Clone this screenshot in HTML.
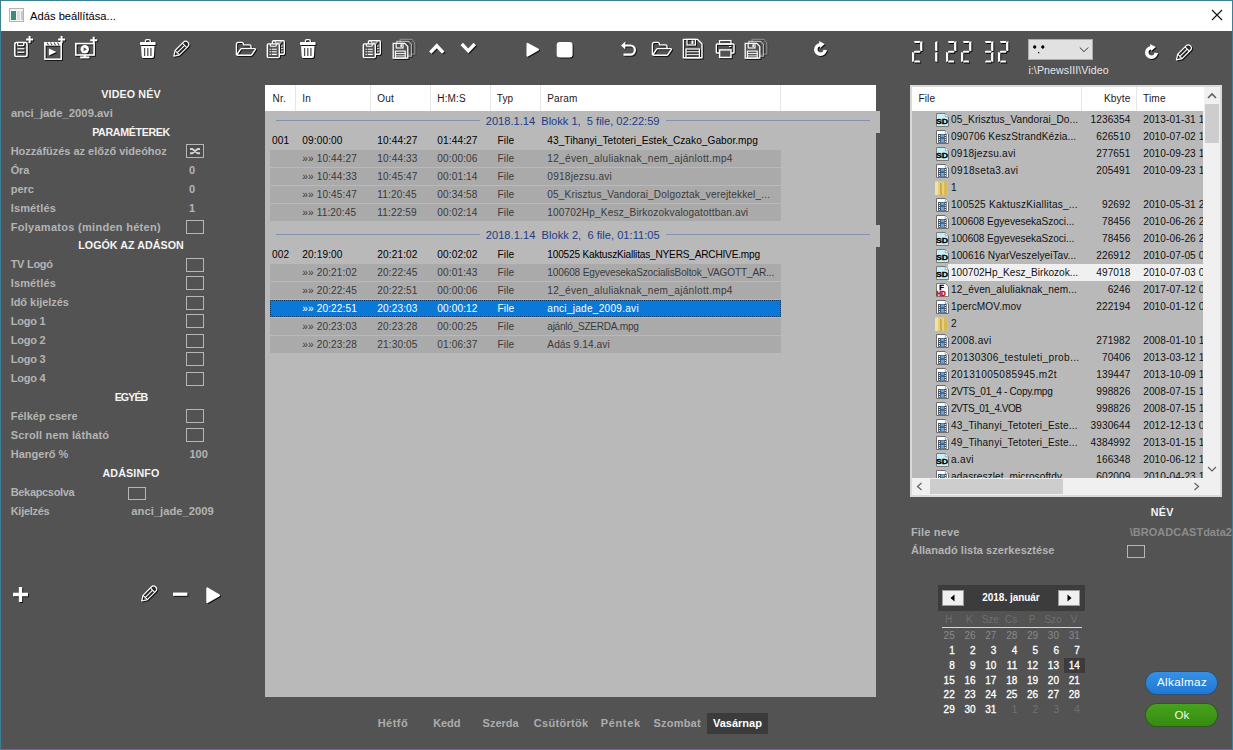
<!DOCTYPE html><html><head><meta charset="utf-8"><style>
html,body{margin:0;padding:0;}
body{width:1233px;height:750px;position:relative;overflow:hidden;font-family:"Liberation Sans",sans-serif;}
.t{position:absolute;white-space:nowrap;line-height:1;}
.r{position:absolute;}
.ics{filter:drop-shadow(0.9px 0.9px 0px #000);}
.ic{filter:drop-shadow(1px 1px 0.3px rgba(0,0,0,0.75));}
</style></head><body>
<div class="r" style="left:0px;top:0px;width:1233px;height:750px;background:#3d7f96;"></div>
<div class="r" style="left:1px;top:1px;width:1231px;height:30px;background:#ffffff;"></div>
<div class="r" style="left:1px;top:31px;width:1231px;height:718px;background:#535353;"></div>
<svg class="r " style="left:9px;top:8px" width="16" height="14" viewBox="0 0 16 14"><rect x="0.5" y="0.5" width="14" height="13" fill="#f4f4f4" stroke="#b4b4b4"/><rect x="2" y="3" width="5" height="9" fill="#3d8c78"/><rect x="8" y="3" width="3" height="9" fill="#dedede"/><rect x="12" y="3" width="2" height="9" fill="#c8c8c8"/></svg>
<div class="t" style="top:10.62px;font-size:11.2px;color:#000;letter-spacing:0.005px;left:30.00px;">Adás beállítása...</div>
<svg class="r " style="left:1208px;top:6px" width="18" height="18" viewBox="0 0 18 18"><path d="M4 4L14 14M14 4L4 14" stroke="#111" stroke-width="1.1"/></svg>
<svg class="r ic" style="left:10px;top:34px" width="26" height="26" viewBox="0 0 26 26"><rect x="4.8" y="8.5" width="12.2" height="14" rx="1.6" fill="none" stroke="#fff" stroke-width="1.6"/><path d="M7.6 8.6V10.8a0.8 0.8 0 0 0 0.8 0.8H13a0.8 0.8 0 0 0 0.8-0.8V8.6" fill="none" stroke="#fff" stroke-width="1.3"/><path d="M7.4 14.7h7M7.4 18.2h7" stroke="#fff" stroke-width="1.6" opacity="0.85"/><path d="M16.1 5.4h7M19.6 1.9000000000000004v7" stroke="#ffffff" stroke-width="2"/></svg>
<svg class="r ic" style="left:40px;top:34px" width="26" height="28" viewBox="0 0 26 28"><rect x="4.9" y="8.8" width="16.3" height="16.4" fill="none" stroke="#fff" stroke-width="1.5"/><rect x="4.2" y="8.1" width="17.7" height="3.6" fill="#fff"/><path d="M7 8.5L8.6 11.3M10.5 8.5L12.1 11.3M14 8.5L15.6 11.3M17.5 8.5L19.1 11.3" stroke="#535353" stroke-width="1.1"/><path d="M8.9 14.6L16.4 18.1L8.9 21.5Z" fill="#fff"/><path d="M18.1 5.4h7M21.6 1.9000000000000004v7" stroke="#ffffff" stroke-width="2"/></svg>
<svg class="r ic" style="left:72px;top:34px" width="28" height="28" viewBox="0 0 28 28"><rect x="3.8" y="9.6" width="18.3" height="11.4" fill="none" stroke="#fff" stroke-width="1.6"/><circle cx="12.8" cy="15.2" r="4.2" fill="#fff"/><path d="M11.6 13.2L14.9 15.2L11.6 17.2Z" fill="#535353"/><path d="M12.8 21v2" stroke="#fff" stroke-width="2"/><path d="M8.2 23.4h9.2" stroke="#fff" stroke-width="2"/><path d="M18.2 6.2h7M21.7 2.7v7" stroke="#ffffff" stroke-width="2"/></svg>
<svg class="r ic" style="left:139px;top:38px" width="20" height="24" viewBox="0 0 20 24"><rect x="1" y="4.1" width="15.6" height="2.9" rx="0.6" fill="#fff"/><path d="M6.4 4.2V3a1.3 1.3 0 0 1 1.3-1.3h2.2a1.3 1.3 0 0 1 1.3 1.3V4.2" fill="none" stroke="#fff" stroke-width="1.3"/><path d="M2.1 8.1h13.4l-0.5 10a2 2 0 0 1-2 1.9H4.6a2 2 0 0 1-2-1.9Z" fill="#fff"/><path d="M5.6 10v8M8.8 10v8M11.9 10v8" stroke="#535353" stroke-width="1.3"/></svg>
<svg class="r ic" style="left:172px;top:36px" width="24" height="24" viewBox="0 0 24 24"><g transform="translate(1.60 20.40) rotate(-45)"><path d="M5.2 -3.1H17A3.1 3.1 0 0 1 17 3.1H5.2Z" fill="#262626"/><path d="M0.3 0L5.2 -3.1H17A3.1 3.1 0 0 1 17 3.1H5.2Z" fill="none" stroke="#fff" stroke-width="1.15" stroke-linejoin="round"/><path d="M5.2 0H15.6" stroke="#fff" stroke-width="1.1"/><path d="M5.2 -3.1V3.1M15.6 -3.1V3.1" stroke="#fff" stroke-width="1.1"/></g></svg>
<svg class="r ic" style="left:235px;top:41px" width="24" height="18" viewBox="0 0 24 18"><path d="M1.4 14.3V3.2Q1.4 1.4 3.2 1.4H7Q7.8 1.4 8.2 2.2L8.7 3.9H14.4Q16 3.9 16 5.5V7.4" fill="none" stroke="#fff" stroke-width="1.4" stroke-linejoin="round"/><path d="M1.6 14.1L5.6 8.1Q6 7.6 6.6 7.6H19.4Q20.9 7.6 20.2 8.7L16.7 13.8Q16.3 14.3 15.6 14.3H2.2" fill="none" stroke="#fff" stroke-width="1.4" stroke-linejoin="round"/></svg>
<svg class="r ic" style="left:266px;top:38px" width="22" height="22" viewBox="0 0 22 22"><rect x="6.5" y="2.7" width="11.8" height="13.6" rx="1" fill="none" stroke="#fff" stroke-width="1.4"/><path d="M9.2 2.8V4.4a0.6 0.6 0 0 0 0.6 0.6h4.6a0.6 0.6 0 0 0 0.6-0.6V2.8" fill="none" stroke="#fff" stroke-width="1"/><path d="M15.2 8h1.6M15.2 10.6h1.6M15.2 13.2h1.6" stroke="#fff" stroke-width="1"/><rect x="1.3" y="5.9" width="12" height="13.7" rx="1" fill="#535353" stroke="#fff" stroke-width="1.4"/><path d="M4.3 6V7.6a0.6 0.6 0 0 0 0.6 0.6h4.8a0.6 0.6 0 0 0 0.6-0.6V6" fill="none" stroke="#fff" stroke-width="1.1"/><path d="M3.6 11.2h1.2M5.8 11.2h5M3.6 13.8h1.2M5.8 13.8h5M3.6 16.4h1.2M5.8 16.4h5" stroke="#fff" stroke-width="1.1"/></svg>
<svg class="r ic" style="left:299px;top:38px" width="20" height="24" viewBox="0 0 20 24"><rect x="1" y="4.1" width="15.6" height="2.9" rx="0.6" fill="#fff"/><path d="M6.4 4.2V3a1.3 1.3 0 0 1 1.3-1.3h2.2a1.3 1.3 0 0 1 1.3 1.3V4.2" fill="none" stroke="#fff" stroke-width="1.3"/><path d="M2.1 8.1h13.4l-0.5 10a2 2 0 0 1-2 1.9H4.6a2 2 0 0 1-2-1.9Z" fill="#fff"/><path d="M5.6 10v8M8.8 10v8M11.9 10v8" stroke="#535353" stroke-width="1.3"/></svg>
<svg class="r ic" style="left:362px;top:38px" width="22" height="22" viewBox="0 0 22 22"><rect x="6.5" y="2.7" width="11.8" height="13.6" rx="1" fill="none" stroke="#fff" stroke-width="1.4"/><path d="M9.2 2.8V4.4a0.6 0.6 0 0 0 0.6 0.6h4.6a0.6 0.6 0 0 0 0.6-0.6V2.8" fill="none" stroke="#fff" stroke-width="1"/><path d="M15.2 8h1.6M15.2 10.6h1.6M15.2 13.2h1.6" stroke="#fff" stroke-width="1"/><rect x="1.3" y="5.9" width="12" height="13.7" rx="1" fill="#535353" stroke="#fff" stroke-width="1.4"/><path d="M4.3 6V7.6a0.6 0.6 0 0 0 0.6 0.6h4.8a0.6 0.6 0 0 0 0.6-0.6V6" fill="none" stroke="#fff" stroke-width="1.1"/><path d="M3.6 11.2h1.2M5.8 11.2h5M3.6 13.8h1.2M5.8 13.8h5M3.6 16.4h1.2M5.8 16.4h5" stroke="#fff" stroke-width="1.1"/></svg>
<svg class="r ic" style="left:392px;top:38px" width="26" height="24" viewBox="0 0 26 24"><path d="M8.2 1.4000000000000004h11.6l3 3V16.2H8.2Z" fill="none" stroke="#fff" stroke-width="1.3" opacity="0.3"/><path d="M4.8 3.4000000000000004h11.6l3 3V18.2H4.8Z" fill="#535353" stroke="#fff" stroke-width="1.3" opacity="0.6"/><path d="M1.2 5.4h11.6l3 3V20.2H1.2Z" fill="#535353" stroke="#fff" stroke-width="1.3" opacity="1"/><rect x="4.2" y="5.4" width="6.8" height="4.6" fill="none" stroke="#fff" stroke-width="1.1"/><rect x="8.4" y="6.3" width="1.5" height="2.8" fill="#fff"/><rect x="3.4" y="13.1" width="9.8" height="7.1" fill="none" stroke="#fff" stroke-width="1.1"/><path d="M3.4 15.5h9.8M3.4 17.9h9.8" stroke="#fff" stroke-width="0.9"/></svg>
<svg class="r ic" style="left:428px;top:41px" width="18" height="15" viewBox="0 0 18 15"><path d="M2.3 11.6L8.8 4.8L15.3 11.6" fill="none" stroke="#fff" stroke-width="3.4"/></svg>
<svg class="r ic" style="left:459px;top:41px" width="18" height="15" viewBox="0 0 18 15"><path d="M2.8 3L9.3 9.8L15.8 3" fill="none" stroke="#fff" stroke-width="3.4"/></svg>
<svg class="r ic" style="left:525px;top:40px" width="17" height="19" viewBox="0 0 17 19"><path d="M3 2.9L13.6 8.8a1 1 0 0 1 0 1.6L3 16.5a1 1 0 0 1-1.5-0.9V3.8A1 1 0 0 1 3 2.9Z" fill="#fff"/></svg>
<svg class="r ic" style="left:555px;top:40px" width="19" height="19" viewBox="0 0 19 19"><rect x="1.7" y="2.1" width="15.9" height="15.3" rx="3" fill="#fff"/></svg>
<svg class="r ic" style="left:619px;top:39px" width="20" height="19" viewBox="0 0 20 19"><path d="M5 6.5H11.3A4.6 4.6 0 0 1 11.3 15.7H4.5" fill="none" stroke="#fff" stroke-width="2.2"/><path d="M2 6.5L6.3 2.5V10.5Z" fill="#fff"/></svg>
<svg class="r ic" style="left:651px;top:41px" width="24" height="18" viewBox="0 0 24 18"><path d="M1.4 14.3V3.2Q1.4 1.4 3.2 1.4H7Q7.8 1.4 8.2 2.2L8.7 3.9H14.4Q16 3.9 16 5.5V7.4" fill="none" stroke="#fff" stroke-width="1.4" stroke-linejoin="round"/><path d="M1.6 14.1L5.6 8.1Q6 7.6 6.6 7.6H19.4Q20.9 7.6 20.2 8.7L16.7 13.8Q16.3 14.3 15.6 14.3H2.2" fill="none" stroke="#fff" stroke-width="1.4" stroke-linejoin="round"/></svg>
<svg class="r ic" style="left:682px;top:38px" width="22" height="22" viewBox="0 0 22 22"><path d="M1.4 1.4H15.5L20 5.9V19.8H1.4Z" fill="none" stroke="#fff" stroke-width="1.4"/><rect x="5" y="1.4" width="8.4" height="5.6" fill="none" stroke="#fff" stroke-width="1.2"/><rect x="9.5" y="2.5" width="2" height="3.5" fill="#fff"/><rect x="4" y="11" width="13.4" height="8.8" fill="none" stroke="#fff" stroke-width="1.2"/><path d="M4 13.8h13.4M4 16.7h13.4" stroke="#fff" stroke-width="1"/></svg>
<svg class="r ic" style="left:715px;top:39px" width="21" height="21" viewBox="0 0 21 21"><rect x="4.6" y="1.6" width="11.4" height="3.4" fill="none" stroke="#fff" stroke-width="1.3"/><rect x="1.3" y="5" width="17.7" height="9" rx="0.8" fill="none" stroke="#fff" stroke-width="1.4"/><rect x="4.6" y="10.9" width="11.4" height="7.5" fill="#535353" stroke="#fff" stroke-width="1.4"/><path d="M14 7.5h2" stroke="#fff" stroke-width="1"/></svg>
<svg class="r ic" style="left:744px;top:38px" width="26" height="24" viewBox="0 0 26 24"><path d="M8.2 1.4000000000000004h11.6l3 3V16.2H8.2Z" fill="none" stroke="#fff" stroke-width="1.3" opacity="0.3"/><path d="M4.8 3.4000000000000004h11.6l3 3V18.2H4.8Z" fill="#535353" stroke="#fff" stroke-width="1.3" opacity="0.6"/><path d="M1.2 5.4h11.6l3 3V20.2H1.2Z" fill="#535353" stroke="#fff" stroke-width="1.3" opacity="1"/><rect x="4.2" y="5.4" width="6.8" height="4.6" fill="none" stroke="#fff" stroke-width="1.1"/><rect x="8.4" y="6.3" width="1.5" height="2.8" fill="#fff"/><rect x="3.4" y="13.1" width="9.8" height="7.1" fill="none" stroke="#fff" stroke-width="1.1"/><path d="M3.4 15.5h9.8M3.4 17.9h9.8" stroke="#fff" stroke-width="0.9"/></svg>
<svg class="r ic" style="left:811px;top:38px" width="18" height="19" viewBox="0 0 18 19"><path d="M14.18 11.91A4.7 4.7 0 1 1 9.09 6.82" fill="none" stroke="#fff" stroke-width="3.6"/><path d="M9.22 9.92L8.01 3.03L13.8 5.97Z" fill="#fff"/></svg>
<svg class="r " style="left:912px;top:41px" width="14" height="24" viewBox="0 0 14 24"><path d="M2.00 0.00 L8.40 0.00 L7.60 2.10 L2.80 2.10ZM8.10 1.00 L10.40 0.30 L10.40 10.30 L8.10 9.60ZM1.80 10.70 L2.60 9.70 L7.80 9.70 L8.60 10.70 L7.80 11.80 L2.60 11.80ZM0.00 11.10 L2.30 11.80 L2.30 20.20 L0.00 21.00ZM2.80 19.40 L7.60 19.40 L8.40 21.50 L2.00 21.50Z" fill="#000" transform="translate(0.9 0.9)"/><path d="M2.00 0.00 L8.40 0.00 L7.60 2.10 L2.80 2.10ZM8.10 1.00 L10.40 0.30 L10.40 10.30 L8.10 9.60ZM1.80 10.70 L2.60 9.70 L7.80 9.70 L8.60 10.70 L7.80 11.80 L2.60 11.80ZM0.00 11.10 L2.30 11.80 L2.30 20.20 L0.00 21.00ZM2.80 19.40 L7.60 19.40 L8.40 21.50 L2.00 21.50Z" fill="#fff"/></svg>
<svg class="r " style="left:927px;top:41px" width="14" height="24" viewBox="0 0 14 24"><path d="M8.10 1.00 L10.40 0.30 L10.40 10.30 L8.10 9.60ZM8.10 11.80 L10.40 11.10 L10.40 21.00 L8.10 20.20Z" fill="#000" transform="translate(0.9 0.9)"/><path d="M8.10 1.00 L10.40 0.30 L10.40 10.30 L8.10 9.60ZM8.10 11.80 L10.40 11.10 L10.40 21.00 L8.10 20.20Z" fill="#fff"/></svg>
<svg class="r " style="left:946px;top:41px" width="14" height="24" viewBox="0 0 14 24"><path d="M2.00 0.00 L8.40 0.00 L7.60 2.10 L2.80 2.10ZM8.10 1.00 L10.40 0.30 L10.40 10.30 L8.10 9.60ZM1.80 10.70 L2.60 9.70 L7.80 9.70 L8.60 10.70 L7.80 11.80 L2.60 11.80ZM0.00 11.10 L2.30 11.80 L2.30 20.20 L0.00 21.00ZM2.80 19.40 L7.60 19.40 L8.40 21.50 L2.00 21.50Z" fill="#000" transform="translate(0.9 0.9)"/><path d="M2.00 0.00 L8.40 0.00 L7.60 2.10 L2.80 2.10ZM8.10 1.00 L10.40 0.30 L10.40 10.30 L8.10 9.60ZM1.80 10.70 L2.60 9.70 L7.80 9.70 L8.60 10.70 L7.80 11.80 L2.60 11.80ZM0.00 11.10 L2.30 11.80 L2.30 20.20 L0.00 21.00ZM2.80 19.40 L7.60 19.40 L8.40 21.50 L2.00 21.50Z" fill="#fff"/></svg>
<svg class="r " style="left:961px;top:41px" width="14" height="24" viewBox="0 0 14 24"><path d="M2.00 0.00 L8.40 0.00 L7.60 2.10 L2.80 2.10ZM8.10 1.00 L10.40 0.30 L10.40 10.30 L8.10 9.60ZM1.80 10.70 L2.60 9.70 L7.80 9.70 L8.60 10.70 L7.80 11.80 L2.60 11.80ZM0.00 11.10 L2.30 11.80 L2.30 20.20 L0.00 21.00ZM2.80 19.40 L7.60 19.40 L8.40 21.50 L2.00 21.50Z" fill="#000" transform="translate(0.9 0.9)"/><path d="M2.00 0.00 L8.40 0.00 L7.60 2.10 L2.80 2.10ZM8.10 1.00 L10.40 0.30 L10.40 10.30 L8.10 9.60ZM1.80 10.70 L2.60 9.70 L7.80 9.70 L8.60 10.70 L7.80 11.80 L2.60 11.80ZM0.00 11.10 L2.30 11.80 L2.30 20.20 L0.00 21.00ZM2.80 19.40 L7.60 19.40 L8.40 21.50 L2.00 21.50Z" fill="#fff"/></svg>
<svg class="r " style="left:983px;top:41px" width="14" height="24" viewBox="0 0 14 24"><path d="M2.00 0.00 L8.40 0.00 L7.60 2.10 L2.80 2.10ZM8.10 1.00 L10.40 0.30 L10.40 10.30 L8.10 9.60ZM1.80 10.70 L2.60 9.70 L7.80 9.70 L8.60 10.70 L7.80 11.80 L2.60 11.80ZM8.10 11.80 L10.40 11.10 L10.40 21.00 L8.10 20.20ZM2.80 19.40 L7.60 19.40 L8.40 21.50 L2.00 21.50Z" fill="#000" transform="translate(0.9 0.9)"/><path d="M2.00 0.00 L8.40 0.00 L7.60 2.10 L2.80 2.10ZM8.10 1.00 L10.40 0.30 L10.40 10.30 L8.10 9.60ZM1.80 10.70 L2.60 9.70 L7.80 9.70 L8.60 10.70 L7.80 11.80 L2.60 11.80ZM8.10 11.80 L10.40 11.10 L10.40 21.00 L8.10 20.20ZM2.80 19.40 L7.60 19.40 L8.40 21.50 L2.00 21.50Z" fill="#fff"/></svg>
<svg class="r " style="left:998px;top:41px" width="14" height="24" viewBox="0 0 14 24"><path d="M2.00 0.00 L8.40 0.00 L7.60 2.10 L2.80 2.10ZM8.10 1.00 L10.40 0.30 L10.40 10.30 L8.10 9.60ZM1.80 10.70 L2.60 9.70 L7.80 9.70 L8.60 10.70 L7.80 11.80 L2.60 11.80ZM0.00 11.10 L2.30 11.80 L2.30 20.20 L0.00 21.00ZM2.80 19.40 L7.60 19.40 L8.40 21.50 L2.00 21.50Z" fill="#000" transform="translate(0.9 0.9)"/><path d="M2.00 0.00 L8.40 0.00 L7.60 2.10 L2.80 2.10ZM8.10 1.00 L10.40 0.30 L10.40 10.30 L8.10 9.60ZM1.80 10.70 L2.60 9.70 L7.80 9.70 L8.60 10.70 L7.80 11.80 L2.60 11.80ZM0.00 11.10 L2.30 11.80 L2.30 20.20 L0.00 21.00ZM2.80 19.40 L7.60 19.40 L8.40 21.50 L2.00 21.50Z" fill="#fff"/></svg>
<div class="r" style="left:1028px;top:39px;width:65px;height:21px;background:#e1e1e1;border:1px solid #adadad;box-sizing:border-box;"></div>
<svg class="r " style="left:1030px;top:42px" width="20" height="14" viewBox="0 0 20 14"><path d="M3.2 5H6.2M4.7 3.4V6.6M11.3 5H14.3M12.8 3.4V6.6" stroke="#000" stroke-width="1.6"/><circle cx="4.7" cy="5" r="1.4" fill="#000"/><circle cx="12.8" cy="5" r="1.4" fill="#000"/><rect x="8" y="10" width="1.3" height="1.3" fill="#111"/></svg>
<svg class="r " style="left:1078px;top:45px" width="12" height="10" viewBox="0 0 12 10"><path d="M1.8 2.5L6 6.7L10.2 2.5" stroke="#333" stroke-width="1" fill="none"/></svg>
<div class="t" style="top:64.53px;font-size:10.6px;color:#e6e6e6;letter-spacing:0.090px;left:1028.40px;">i:\PnewsIII\Video</div>
<svg class="r ic" style="left:1142px;top:41px" width="18" height="19" viewBox="0 0 18 19"><path d="M14.18 11.91A4.7 4.7 0 1 1 9.09 6.82" fill="none" stroke="#fff" stroke-width="3.6"/><path d="M9.22 9.92L8.01 3.03L13.8 5.97Z" fill="#fff"/></svg>
<svg class="r ic" style="left:1174px;top:40px" width="24" height="24" viewBox="0 0 24 24"><g transform="translate(2.20 20.10) rotate(-45)"><path d="M5.2 -3.1H17A3.1 3.1 0 0 1 17 3.1H5.2Z" fill="#262626"/><path d="M0.3 0L5.2 -3.1H17A3.1 3.1 0 0 1 17 3.1H5.2Z" fill="none" stroke="#fff" stroke-width="1.15" stroke-linejoin="round"/><path d="M5.2 0H15.6" stroke="#fff" stroke-width="1.1"/><path d="M5.2 -3.1V3.1M15.6 -3.1V3.1" stroke="#fff" stroke-width="1.1"/></g></svg>
<div class="t" style="top:88.74px;font-size:10.7px;color:#f4f4f4;font-weight:bold;letter-spacing:0.129px;left:-69.00px;width:400px;text-align:center;">VIDEO NÉV</div>
<div class="t" style="top:107.63px;font-size:11.3px;color:#b4b4b4;font-weight:bold;letter-spacing:0.001px;left:11.00px;">anci_jade_2009.avi</div>
<div class="t" style="top:126.64px;font-size:10.7px;color:#f4f4f4;font-weight:bold;letter-spacing:-0.364px;left:-69.00px;width:400px;text-align:center;">PARAMÉTEREK</div>
<div class="t" style="top:145.89px;font-size:11px;color:#b4b4b4;font-weight:bold;letter-spacing:-0.014px;left:10.70px;">Hozzáfüzés az előző videóhoz</div>
<div class="r" style="left:186px;top:144px;width:18px;height:14px;background:transparent;border:1px solid #b6b6b6;box-sizing:border-box;"></div>
<svg class="r " style="left:186px;top:144px" width="18" height="14" viewBox="0 0 18 14"><rect x="1" y="1" width="16" height="12" fill="#4c4c4c"/><path d="M4 5H6.3L11.7 9.2H14M4 9.2H6.3L11.7 5H14" stroke="#d2d2d2" stroke-width="1.9" fill="none"/></svg>
<div class="t" style="top:164.79px;font-size:11px;color:#b4b4b4;font-weight:bold;letter-spacing:-0.127px;left:10.70px;">Óra</div>
<div class="t" style="top:164.79px;font-size:11px;color:#b4b4b4;font-weight:bold;left:189.00px;">0</div>
<div class="t" style="top:183.79px;font-size:11px;color:#b4b4b4;font-weight:bold;letter-spacing:-0.012px;left:10.70px;">perc</div>
<div class="t" style="top:183.79px;font-size:11px;color:#b4b4b4;font-weight:bold;left:189.00px;">0</div>
<div class="t" style="top:202.69px;font-size:11px;color:#b4b4b4;font-weight:bold;letter-spacing:0.153px;left:10.70px;">Ismétlés</div>
<div class="t" style="top:202.69px;font-size:11px;color:#b4b4b4;font-weight:bold;left:189.00px;">1</div>
<div class="t" style="top:221.59px;font-size:11px;color:#b4b4b4;font-weight:bold;letter-spacing:0.287px;left:10.70px;">Folyamatos (minden héten)</div>
<div class="r" style="left:186px;top:219.70000000000002px;width:18px;height:14px;background:transparent;border:1px solid #b6b6b6;box-sizing:border-box;"></div>
<div class="t" style="top:240.14px;font-size:10.7px;color:#f4f4f4;font-weight:bold;letter-spacing:0.042px;left:-69.00px;width:400px;text-align:center;">LOGÓK AZ ADÁSON</div>
<div class="t" style="top:259.39px;font-size:11px;color:#b4b4b4;font-weight:bold;letter-spacing:-0.282px;left:10.70px;">TV Logó</div>
<div class="r" style="left:186px;top:258px;width:18px;height:14px;background:transparent;border:1px solid #b6b6b6;box-sizing:border-box;"></div>
<div class="t" style="top:278.39px;font-size:11px;color:#b4b4b4;font-weight:bold;letter-spacing:0.153px;left:10.70px;">Ismétlés</div>
<div class="r" style="left:186px;top:276px;width:18px;height:14px;background:transparent;border:1px solid #b6b6b6;box-sizing:border-box;"></div>
<div class="t" style="top:297.39px;font-size:11px;color:#b4b4b4;font-weight:bold;letter-spacing:-0.045px;left:10.70px;">Idő kijelzés</div>
<div class="r" style="left:186px;top:296px;width:18px;height:14px;background:transparent;border:1px solid #b6b6b6;box-sizing:border-box;"></div>
<div class="t" style="top:316.39px;font-size:11px;color:#b4b4b4;font-weight:bold;letter-spacing:-0.230px;left:10.70px;">Logo 1</div>
<div class="r" style="left:186px;top:314px;width:18px;height:14px;background:transparent;border:1px solid #b6b6b6;box-sizing:border-box;"></div>
<div class="t" style="top:335.39px;font-size:11px;color:#b4b4b4;font-weight:bold;letter-spacing:-0.230px;left:10.70px;">Logo 2</div>
<div class="r" style="left:186px;top:334px;width:18px;height:14px;background:transparent;border:1px solid #b6b6b6;box-sizing:border-box;"></div>
<div class="t" style="top:354.39px;font-size:11px;color:#b4b4b4;font-weight:bold;letter-spacing:-0.230px;left:10.70px;">Logo 3</div>
<div class="r" style="left:186px;top:352px;width:18px;height:14px;background:transparent;border:1px solid #b6b6b6;box-sizing:border-box;"></div>
<div class="t" style="top:373.39px;font-size:11px;color:#b4b4b4;font-weight:bold;letter-spacing:-0.230px;left:10.70px;">Logo 4</div>
<div class="r" style="left:186px;top:372px;width:18px;height:14px;background:transparent;border:1px solid #b6b6b6;box-sizing:border-box;"></div>
<div class="t" style="top:392.04px;font-size:10.7px;color:#f4f4f4;font-weight:bold;letter-spacing:-0.940px;left:-69.00px;width:400px;text-align:center;">EGYÉB</div>
<div class="t" style="top:411.29px;font-size:11px;color:#b4b4b4;font-weight:bold;letter-spacing:0.022px;left:10.70px;">Félkép csere</div>
<div class="r" style="left:186px;top:409px;width:18px;height:14px;background:transparent;border:1px solid #b6b6b6;box-sizing:border-box;"></div>
<div class="t" style="top:430.19px;font-size:11px;color:#b4b4b4;font-weight:bold;letter-spacing:0.173px;left:10.70px;">Scroll nem látható</div>
<div class="r" style="left:186px;top:428px;width:18px;height:14px;background:transparent;border:1px solid #b6b6b6;box-sizing:border-box;"></div>
<div class="t" style="top:449.09px;font-size:11px;color:#b4b4b4;font-weight:bold;letter-spacing:0.018px;left:10.70px;">Hangerő %</div>
<div class="t" style="top:449.09px;font-size:11px;color:#b4b4b4;font-weight:bold;left:189.50px;">100</div>
<div class="t" style="top:467.64px;font-size:10.7px;color:#f4f4f4;font-weight:bold;letter-spacing:0.146px;left:-69.00px;width:400px;text-align:center;">ADÁSINFO</div>
<div class="t" style="top:486.89px;font-size:11px;color:#b4b4b4;font-weight:bold;letter-spacing:-0.326px;left:10.70px;">Bekapcsolva</div>
<div class="r" style="left:128px;top:487px;width:18px;height:13px;background:transparent;border:1px solid #b6b6b6;box-sizing:border-box;"></div>
<div class="t" style="top:505.79px;font-size:11px;color:#b4b4b4;font-weight:bold;letter-spacing:-0.281px;left:10.70px;">Kijelzés</div>
<div class="t" style="top:505.62px;font-size:11.2px;color:#b4b4b4;font-weight:bold;letter-spacing:0.031px;left:131.30px;">anci_jade_2009</div>
<svg class="r ic" style="left:11px;top:585px" width="19" height="19" viewBox="0 0 19 19"><path d="M2 9.5h15M9.5 2v15" stroke="#fff" stroke-width="3.3"/></svg>
<svg class="r ic" style="left:140px;top:581px" width="24" height="24" viewBox="0 0 24 24"><g transform="translate(1.50 20.20) rotate(-45)"><path d="M5.2 -3.1H17A3.1 3.1 0 0 1 17 3.1H5.2Z" fill="#262626"/><path d="M0.3 0L5.2 -3.1H17A3.1 3.1 0 0 1 17 3.1H5.2Z" fill="none" stroke="#fff" stroke-width="1.15" stroke-linejoin="round"/><path d="M5.2 0H15.6" stroke="#fff" stroke-width="1.1"/><path d="M5.2 -3.1V3.1M15.6 -3.1V3.1" stroke="#fff" stroke-width="1.1"/></g></svg>
<svg class="r ic" style="left:171px;top:588px" width="19" height="12" viewBox="0 0 19 12"><path d="M2 6.2h14.4" stroke="#fff" stroke-width="3.3"/></svg>
<svg class="r ic" style="left:204px;top:584px" width="19" height="21" viewBox="0 0 19 21"><path d="M3.8 3.5L15.6 10.6a1 1 0 0 1 0 1.6L3.8 19a1 1 0 0 1-1.5-0.9V4.4A1 1 0 0 1 3.8 3.5Z" fill="#fff"/></svg>
<div class="r" style="left:265px;top:85px;width:611px;height:612px;background:#b9b9b9;"></div>
<div class="r" style="left:265px;top:85px;width:611px;height:26px;background:#ffffff;"></div>
<div class="r" style="left:295px;top:85px;width:1px;height:26px;background:#e6e6e6;"></div>
<div class="r" style="left:370px;top:85px;width:1px;height:26px;background:#e6e6e6;"></div>
<div class="r" style="left:430px;top:85px;width:1px;height:26px;background:#e6e6e6;"></div>
<div class="r" style="left:490px;top:85px;width:1px;height:26px;background:#e6e6e6;"></div>
<div class="r" style="left:540px;top:85px;width:1px;height:26px;background:#e6e6e6;"></div>
<div class="r" style="left:780px;top:85px;width:1px;height:26px;background:#e6e6e6;"></div>
<div class="t" style="top:93.94px;font-size:10px;color:#1a1a1a;letter-spacing:0.150px;left:272.60px;">Nr.</div>
<div class="t" style="top:93.94px;font-size:10px;color:#1a1a1a;letter-spacing:0.150px;left:302.30px;">In</div>
<div class="t" style="top:93.94px;font-size:10px;color:#1a1a1a;letter-spacing:0.150px;left:377.30px;">Out</div>
<div class="t" style="top:93.94px;font-size:10px;color:#1a1a1a;letter-spacing:0.150px;left:437.30px;">H:M:S</div>
<div class="t" style="top:93.94px;font-size:10px;color:#1a1a1a;letter-spacing:0.150px;left:496.70px;">Typ</div>
<div class="t" style="top:93.94px;font-size:10px;color:#1a1a1a;letter-spacing:0.150px;left:547.30px;">Param</div>
<div class="r" style="left:876px;top:111px;width:4px;height:22px;background:#b9b9b9;"></div>
<div class="r" style="left:276px;top:120px;width:204px;height:1px;background:#8391ad;"></div>
<div class="t" style="top:115.60px;font-size:11.1px;color:#203c86;letter-spacing:-0.006px;left:485.80px;white-space:pre;">2018.1.14  Blokk 1,  5 file, 02:22:59</div>
<div class="r" style="left:666px;top:120px;width:204px;height:1px;background:#8391ad;"></div>
<div class="t" style="top:135.65px;font-size:10.1px;color:#000;letter-spacing:0.120px;left:272.00px;">001</div>
<div class="t" style="top:135.65px;font-size:10.1px;color:#000;letter-spacing:0.120px;left:302.30px;">09:00:00</div>
<div class="t" style="top:135.65px;font-size:10.1px;color:#000;letter-spacing:0.120px;left:377.30px;">10:44:27</div>
<div class="t" style="top:135.65px;font-size:10.1px;color:#000;letter-spacing:0.120px;left:437.30px;">01:44:27</div>
<div class="t" style="top:135.65px;font-size:10.1px;color:#000;letter-spacing:0.120px;left:497.50px;">File</div>
<div class="t" style="top:135.65px;font-size:10.1px;color:#000;letter-spacing:0.055px;left:547.30px;">43_Tihanyi_Tetoteri_Estek_Czako_Gabor.mpg</div>
<div class="r" style="left:270px;top:150px;width:511px;height:17px;background:#aaaaaa;"></div>
<div class="t" style="top:153.65px;font-size:10.1px;color:#3a3a3a;letter-spacing:0.120px;left:302.30px;">»» 10:44:27</div>
<div class="t" style="top:153.65px;font-size:10.1px;color:#3a3a3a;letter-spacing:0.120px;left:377.30px;">10:44:33</div>
<div class="t" style="top:153.65px;font-size:10.1px;color:#3a3a3a;letter-spacing:0.120px;left:437.30px;">00:00:06</div>
<div class="t" style="top:153.65px;font-size:10.1px;color:#3a3a3a;letter-spacing:0.120px;left:497.50px;">File</div>
<div class="t" style="top:153.65px;font-size:10.1px;color:#3a3a3a;letter-spacing:0.297px;left:547.30px;">12_éven_aluliaknak_nem_ajánlott.mp4</div>
<div class="r" style="left:270px;top:168px;width:511px;height:17px;background:#aaaaaa;"></div>
<div class="t" style="top:171.65px;font-size:10.1px;color:#3a3a3a;letter-spacing:0.120px;left:302.30px;">»» 10:44:33</div>
<div class="t" style="top:171.65px;font-size:10.1px;color:#3a3a3a;letter-spacing:0.120px;left:377.30px;">10:45:47</div>
<div class="t" style="top:171.65px;font-size:10.1px;color:#3a3a3a;letter-spacing:0.120px;left:437.30px;">00:01:14</div>
<div class="t" style="top:171.65px;font-size:10.1px;color:#3a3a3a;letter-spacing:0.120px;left:497.50px;">File</div>
<div class="t" style="top:171.65px;font-size:10.1px;color:#3a3a3a;letter-spacing:0.228px;left:547.30px;">0918jezsu.avi</div>
<div class="r" style="left:270px;top:186px;width:511px;height:17px;background:#aaaaaa;"></div>
<div class="t" style="top:189.65px;font-size:10.1px;color:#3a3a3a;letter-spacing:0.120px;left:302.30px;">»» 10:45:47</div>
<div class="t" style="top:189.65px;font-size:10.1px;color:#3a3a3a;letter-spacing:0.120px;left:377.30px;">11:20:45</div>
<div class="t" style="top:189.65px;font-size:10.1px;color:#3a3a3a;letter-spacing:0.120px;left:437.30px;">00:34:58</div>
<div class="t" style="top:189.65px;font-size:10.1px;color:#3a3a3a;letter-spacing:0.120px;left:497.50px;">File</div>
<div class="t" style="top:189.65px;font-size:10.1px;color:#3a3a3a;letter-spacing:0.139px;left:547.30px;">05_Krisztus_Vandorai_Dolgoztak_verejtekkel_...</div>
<div class="r" style="left:270px;top:204px;width:511px;height:17px;background:#aaaaaa;"></div>
<div class="t" style="top:207.65px;font-size:10.1px;color:#3a3a3a;letter-spacing:0.120px;left:302.30px;">»» 11:20:45</div>
<div class="t" style="top:207.65px;font-size:10.1px;color:#3a3a3a;letter-spacing:0.120px;left:377.30px;">11:22:59</div>
<div class="t" style="top:207.65px;font-size:10.1px;color:#3a3a3a;letter-spacing:0.120px;left:437.30px;">00:02:14</div>
<div class="t" style="top:207.65px;font-size:10.1px;color:#3a3a3a;letter-spacing:0.120px;left:497.50px;">File</div>
<div class="t" style="top:207.65px;font-size:10.1px;color:#3a3a3a;letter-spacing:0.145px;left:547.30px;">100702Hp_Kesz_Birkozokvalogatottban.avi</div>
<div class="r" style="left:876px;top:225px;width:4px;height:22px;background:#b9b9b9;"></div>
<div class="r" style="left:276px;top:234px;width:204px;height:1px;background:#8391ad;"></div>
<div class="t" style="top:229.60px;font-size:11.1px;color:#203c86;letter-spacing:0.022px;left:485.80px;white-space:pre;">2018.1.14  Blokk 2,  6 file, 01:11:05</div>
<div class="r" style="left:666px;top:234px;width:204px;height:1px;background:#8391ad;"></div>
<div class="t" style="top:249.65px;font-size:10.1px;color:#000;letter-spacing:0.120px;left:272.00px;">002</div>
<div class="t" style="top:249.65px;font-size:10.1px;color:#000;letter-spacing:0.120px;left:302.30px;">20:19:00</div>
<div class="t" style="top:249.65px;font-size:10.1px;color:#000;letter-spacing:0.120px;left:377.30px;">20:21:02</div>
<div class="t" style="top:249.65px;font-size:10.1px;color:#000;letter-spacing:0.120px;left:437.30px;">00:02:02</div>
<div class="t" style="top:249.65px;font-size:10.1px;color:#000;letter-spacing:0.120px;left:497.50px;">File</div>
<div class="t" style="top:249.65px;font-size:10.1px;color:#000;letter-spacing:-0.193px;left:547.30px;">100525 KaktuszKiallitas_NYERS_ARCHIVE.mpg</div>
<div class="r" style="left:270px;top:264px;width:511px;height:17px;background:#aaaaaa;"></div>
<div class="t" style="top:267.65px;font-size:10.1px;color:#3a3a3a;letter-spacing:0.120px;left:302.30px;">»» 20:21:02</div>
<div class="t" style="top:267.65px;font-size:10.1px;color:#3a3a3a;letter-spacing:0.120px;left:377.30px;">20:22:45</div>
<div class="t" style="top:267.65px;font-size:10.1px;color:#3a3a3a;letter-spacing:0.120px;left:437.30px;">00:01:43</div>
<div class="t" style="top:267.65px;font-size:10.1px;color:#3a3a3a;letter-spacing:0.120px;left:497.50px;">File</div>
<div class="t" style="top:267.65px;font-size:10.1px;color:#3a3a3a;letter-spacing:-0.155px;left:547.30px;">100608 EgyevesekaSzocialisBoltok_VAGOTT_AR...</div>
<div class="r" style="left:270px;top:282px;width:511px;height:17px;background:#aaaaaa;"></div>
<div class="t" style="top:285.65px;font-size:10.1px;color:#3a3a3a;letter-spacing:0.120px;left:302.30px;">»» 20:22:45</div>
<div class="t" style="top:285.65px;font-size:10.1px;color:#3a3a3a;letter-spacing:0.120px;left:377.30px;">20:22:51</div>
<div class="t" style="top:285.65px;font-size:10.1px;color:#3a3a3a;letter-spacing:0.120px;left:437.30px;">00:00:06</div>
<div class="t" style="top:285.65px;font-size:10.1px;color:#3a3a3a;letter-spacing:0.120px;left:497.50px;">File</div>
<div class="t" style="top:285.65px;font-size:10.1px;color:#3a3a3a;letter-spacing:0.297px;left:547.30px;">12_éven_aluliaknak_nem_ajánlott.mp4</div>
<div class="r" style="left:270px;top:300px;width:511px;height:17px;background:#0a78d7;outline:1px dotted #0b3b6b;outline-offset:-1px;"></div>
<div class="t" style="top:303.65px;font-size:10.1px;color:#ffffff;letter-spacing:0.120px;left:302.30px;">»» 20:22:51</div>
<div class="t" style="top:303.65px;font-size:10.1px;color:#ffffff;letter-spacing:0.120px;left:377.30px;">20:23:03</div>
<div class="t" style="top:303.65px;font-size:10.1px;color:#ffffff;letter-spacing:0.120px;left:437.30px;">00:00:12</div>
<div class="t" style="top:303.65px;font-size:10.1px;color:#ffffff;letter-spacing:0.120px;left:497.50px;">File</div>
<div class="t" style="top:303.65px;font-size:10.1px;color:#ffffff;letter-spacing:0.256px;left:547.30px;">anci_jade_2009.avi</div>
<div class="r" style="left:270px;top:318px;width:511px;height:17px;background:#aaaaaa;"></div>
<div class="t" style="top:321.65px;font-size:10.1px;color:#3a3a3a;letter-spacing:0.120px;left:302.30px;">»» 20:23:03</div>
<div class="t" style="top:321.65px;font-size:10.1px;color:#3a3a3a;letter-spacing:0.120px;left:377.30px;">20:23:28</div>
<div class="t" style="top:321.65px;font-size:10.1px;color:#3a3a3a;letter-spacing:0.120px;left:437.30px;">00:00:25</div>
<div class="t" style="top:321.65px;font-size:10.1px;color:#3a3a3a;letter-spacing:0.120px;left:497.50px;">File</div>
<div class="t" style="top:321.65px;font-size:10.1px;color:#3a3a3a;letter-spacing:-0.268px;left:547.30px;">ajánló_SZERDA.mpg</div>
<div class="r" style="left:270px;top:336px;width:511px;height:17px;background:#aaaaaa;"></div>
<div class="t" style="top:339.65px;font-size:10.1px;color:#3a3a3a;letter-spacing:0.120px;left:302.30px;">»» 20:23:28</div>
<div class="t" style="top:339.65px;font-size:10.1px;color:#3a3a3a;letter-spacing:0.120px;left:377.30px;">21:30:05</div>
<div class="t" style="top:339.65px;font-size:10.1px;color:#3a3a3a;letter-spacing:0.120px;left:437.30px;">01:06:37</div>
<div class="t" style="top:339.65px;font-size:10.1px;color:#3a3a3a;letter-spacing:0.120px;left:497.50px;">File</div>
<div class="t" style="top:339.65px;font-size:10.1px;color:#3a3a3a;letter-spacing:0.100px;left:547.30px;">Adás 9.14.avi</div>
<div class="r" style="left:707px;top:713px;width:61px;height:21px;background:#3b3b3b;"></div>
<div class="t" style="top:717.89px;font-size:11px;color:#adadad;font-weight:bold;letter-spacing:0.473px;left:377.70px;">Hétfő</div>
<div class="t" style="top:717.89px;font-size:11px;color:#adadad;font-weight:bold;letter-spacing:-0.067px;left:433.20px;">Kedd</div>
<div class="t" style="top:717.89px;font-size:11px;color:#adadad;font-weight:bold;letter-spacing:0.006px;left:482.60px;">Szerda</div>
<div class="t" style="top:717.89px;font-size:11px;color:#adadad;font-weight:bold;letter-spacing:0.319px;left:533.70px;">Csütörtök</div>
<div class="t" style="top:717.89px;font-size:11px;color:#adadad;font-weight:bold;letter-spacing:0.625px;left:600.80px;">Péntek</div>
<div class="t" style="top:717.89px;font-size:11px;color:#adadad;font-weight:bold;letter-spacing:0.194px;left:653.60px;">Szombat</div>
<div class="t" style="top:717.89px;font-size:11px;color:#ffffff;font-weight:bold;letter-spacing:0.011px;left:712.90px;">Vasárnap</div>
<div class="r" style="left:910px;top:85px;width:312px;height:412px;background:#d9d9d9;"></div>
<div class="r" style="left:912px;top:87px;width:308px;height:408px;background:#f0f0f0;"></div>
<div class="r" style="left:912px;top:87px;width:292px;height:24px;background:#ffffff;"></div>
<div class="r" style="left:1081px;top:87px;width:1px;height:24px;background:#e6e6e6;"></div>
<div class="r" style="left:1136px;top:87px;width:1px;height:24px;background:#e6e6e6;"></div>
<div class="t" style="top:93.75px;font-size:10.1px;color:#1a1a1a;letter-spacing:0.150px;left:918.40px;">File</div>
<div class="t" style="top:93.75px;font-size:10.1px;color:#1a1a1a;letter-spacing:0.150px;right:102.50px;text-align:right;">Kbyte</div>
<div class="t" style="top:93.75px;font-size:10.1px;color:#1a1a1a;letter-spacing:0.150px;left:1143.00px;">Time</div>
<div class="r" style="left:912px;top:111px;width:291px;height:367px;background:#b9b9b9;"></div>
<div class="r" style="left:1204px;top:87px;width:16px;height:391px;background:#f0f0f0;"></div>
<div class="r" style="left:1205px;top:104px;width:14px;height:39px;background:#cdcdcd;"></div>
<svg class="r " style="left:1205px;top:90px" width="14" height="12" viewBox="0 0 14 12"><path d="M3 8L7 4L11 8" stroke="#606060" stroke-width="1.6" fill="none"/></svg>
<svg class="r " style="left:1205px;top:463px" width="14" height="12" viewBox="0 0 14 12"><path d="M3 4L7 8L11 4" stroke="#606060" stroke-width="1.2" fill="none"/></svg>
<div class="r" style="left:912px;top:478px;width:308px;height:17px;background:#f0f0f0;"></div>
<div class="r" style="left:930px;top:479px;width:133px;height:15px;background:#cdcdcd;"></div>
<svg class="r " style="left:913px;top:480px" width="14" height="13" viewBox="0 0 14 13"><path d="M8.5 3L4.5 6.5L8.5 10" stroke="#606060" stroke-width="1.2" fill="none"/></svg>
<svg class="r " style="left:1189px;top:480px" width="14" height="13" viewBox="0 0 14 13"><path d="M5.5 3L9.5 6.5L5.5 10" stroke="#606060" stroke-width="1.2" fill="none"/></svg>
<div class="r" style="left:912px;top:111px;width:291px;height:367px;overflow:hidden"><div class="r" style="left:-912px;top:-111px;width:1233px;height:750px"><svg class="r" style="left:936px;top:113px" width="13" height="14" viewBox="0 0 13 14"><path d="M0.5 0.5H9.3L12.5 3.7V13.5H0.5Z" fill="#c4f0fa" stroke="#7a7a7a"/><path d="M9.3 0.5V3.7H12.5" fill="#fff" stroke="#8a8a8a" stroke-width="0.7"/><text x="0.1" y="13.4" font-family="Liberation Sans" font-weight="bold" font-size="8" fill="#000" transform="scale(1.1 0.85)" letter-spacing="-0.1" stroke="#000" stroke-width="0.35">SD</text></svg>
<div class="t" style="left:951px;top:115.05px;font-size:10.1px;letter-spacing:0.087px;color:#111">05_Krisztus_Vandorai_Do...</div>
<div class="t" style="right:102.5px;top:115.05px;font-size:10.1px;letter-spacing:0.1px;color:#111;text-align:right">1236354</div>
<div class="t" style="left:1143.2px;top:115.05px;font-size:10.1px;letter-spacing:0.1px;color:#111">2013-01-31 1</div>
<svg class="r" style="left:936px;top:130px" width="13" height="14" viewBox="0 0 13 14"><path d="M0.5 0.5H9.3L12.5 3.7V13.5H0.5Z" fill="#fdfdfd" stroke="#6e6e6e"/><path d="M9.3 0.5V3.7H12.5" fill="#fff" stroke="#8a8a8a" stroke-width="0.7"/><rect x="2.1" y="4" width="8.5" height="8.8" fill="#3c4858"/><rect x="4.8" y="4.4" width="3.4" height="8" fill="#66a6da"/><rect x="4.8" y="7.2" width="3.4" height="1.6" fill="#3e5a8a"/><path d="M3.5 5v1M3.5 7v1M3.5 9v1M3.5 11v1M9.3 5v1M9.3 7v1M9.3 9v1M9.3 11v1" stroke="#f4f8ff" stroke-width="1.1"/></svg>
<div class="t" style="left:951px;top:132.05px;font-size:10.1px;letter-spacing:0.117px;color:#111">090706 KeszStrandKézia...</div>
<div class="t" style="right:102.5px;top:132.05px;font-size:10.1px;letter-spacing:0.1px;color:#111;text-align:right">626510</div>
<div class="t" style="left:1143.2px;top:132.05px;font-size:10.1px;letter-spacing:0.1px;color:#111">2010-07-02 1</div>
<svg class="r" style="left:936px;top:147px" width="13" height="14" viewBox="0 0 13 14"><path d="M0.5 0.5H9.3L12.5 3.7V13.5H0.5Z" fill="#c4f0fa" stroke="#7a7a7a"/><path d="M9.3 0.5V3.7H12.5" fill="#fff" stroke="#8a8a8a" stroke-width="0.7"/><text x="0.1" y="13.4" font-family="Liberation Sans" font-weight="bold" font-size="8" fill="#000" transform="scale(1.1 0.85)" letter-spacing="-0.1" stroke="#000" stroke-width="0.35">SD</text></svg>
<div class="t" style="left:951px;top:149.05px;font-size:10.1px;letter-spacing:0.228px;color:#111">0918jezsu.avi</div>
<div class="t" style="right:102.5px;top:149.05px;font-size:10.1px;letter-spacing:0.1px;color:#111;text-align:right">277651</div>
<div class="t" style="left:1143.2px;top:149.05px;font-size:10.1px;letter-spacing:0.1px;color:#111">2010-09-23 1</div>
<svg class="r" style="left:936px;top:164px" width="13" height="14" viewBox="0 0 13 14"><path d="M0.5 0.5H9.3L12.5 3.7V13.5H0.5Z" fill="#fdfdfd" stroke="#6e6e6e"/><path d="M9.3 0.5V3.7H12.5" fill="#fff" stroke="#8a8a8a" stroke-width="0.7"/><rect x="2.1" y="4" width="8.5" height="8.8" fill="#3c4858"/><rect x="4.8" y="4.4" width="3.4" height="8" fill="#66a6da"/><rect x="4.8" y="7.2" width="3.4" height="1.6" fill="#3e5a8a"/><path d="M3.5 5v1M3.5 7v1M3.5 9v1M3.5 11v1M9.3 5v1M9.3 7v1M9.3 9v1M9.3 11v1" stroke="#f4f8ff" stroke-width="1.1"/></svg>
<div class="t" style="left:951px;top:166.05px;font-size:10.1px;letter-spacing:0.351px;color:#111">0918seta3.avi</div>
<div class="t" style="right:102.5px;top:166.05px;font-size:10.1px;letter-spacing:0.1px;color:#111;text-align:right">205491</div>
<div class="t" style="left:1143.2px;top:166.05px;font-size:10.1px;letter-spacing:0.1px;color:#111">2010-09-23 1</div>
<svg class="r" style="left:935px;top:181px" width="13" height="14" viewBox="0 0 13 14"><rect x="0" y="0.5" width="12.4" height="13.5" fill="#e6cf7a"/><rect x="0" y="0.5" width="3" height="13.5" fill="#f2e2a0"/><rect x="5" y="2" width="1.8" height="12" fill="#c9a94a"/><rect x="9" y="0.5" width="3.4" height="13.5" fill="#d8b957"/></svg>
<div class="t" style="left:951px;top:183.05px;font-size:10.1px;letter-spacing:0.100px;color:#111">1</div>
<svg class="r" style="left:936px;top:198px" width="13" height="14" viewBox="0 0 13 14"><path d="M0.5 0.5H9.3L12.5 3.7V13.5H0.5Z" fill="#fdfdfd" stroke="#6e6e6e"/><path d="M9.3 0.5V3.7H12.5" fill="#fff" stroke="#8a8a8a" stroke-width="0.7"/><rect x="2.1" y="4" width="8.5" height="8.8" fill="#3c4858"/><rect x="4.8" y="4.4" width="3.4" height="8" fill="#66a6da"/><rect x="4.8" y="7.2" width="3.4" height="1.6" fill="#3e5a8a"/><path d="M3.5 5v1M3.5 7v1M3.5 9v1M3.5 11v1M9.3 5v1M9.3 7v1M9.3 9v1M9.3 11v1" stroke="#f4f8ff" stroke-width="1.1"/></svg>
<div class="t" style="left:951px;top:200.05px;font-size:10.1px;letter-spacing:0.209px;color:#111">100525 KaktuszKiallitas_...</div>
<div class="t" style="right:102.5px;top:200.05px;font-size:10.1px;letter-spacing:0.1px;color:#111;text-align:right">92692</div>
<div class="t" style="left:1143.2px;top:200.05px;font-size:10.1px;letter-spacing:0.1px;color:#111">2010-05-31 2</div>
<svg class="r" style="left:936px;top:215px" width="13" height="14" viewBox="0 0 13 14"><path d="M0.5 0.5H9.3L12.5 3.7V13.5H0.5Z" fill="#fdfdfd" stroke="#6e6e6e"/><path d="M9.3 0.5V3.7H12.5" fill="#fff" stroke="#8a8a8a" stroke-width="0.7"/><rect x="2.1" y="4" width="8.5" height="8.8" fill="#3c4858"/><rect x="4.8" y="4.4" width="3.4" height="8" fill="#66a6da"/><rect x="4.8" y="7.2" width="3.4" height="1.6" fill="#3e5a8a"/><path d="M3.5 5v1M3.5 7v1M3.5 9v1M3.5 11v1M9.3 5v1M9.3 7v1M9.3 9v1M9.3 11v1" stroke="#f4f8ff" stroke-width="1.1"/></svg>
<div class="t" style="left:951px;top:217.05px;font-size:10.1px;letter-spacing:-0.052px;color:#111">100608 EgyevesekaSzoci...</div>
<div class="t" style="right:102.5px;top:217.05px;font-size:10.1px;letter-spacing:0.1px;color:#111;text-align:right">78456</div>
<div class="t" style="left:1143.2px;top:217.05px;font-size:10.1px;letter-spacing:0.1px;color:#111">2010-06-26 2</div>
<svg class="r" style="left:936px;top:232px" width="13" height="14" viewBox="0 0 13 14"><path d="M0.5 0.5H9.3L12.5 3.7V13.5H0.5Z" fill="#c4f0fa" stroke="#7a7a7a"/><path d="M9.3 0.5V3.7H12.5" fill="#fff" stroke="#8a8a8a" stroke-width="0.7"/><text x="0.1" y="13.4" font-family="Liberation Sans" font-weight="bold" font-size="8" fill="#000" transform="scale(1.1 0.85)" letter-spacing="-0.1" stroke="#000" stroke-width="0.35">SD</text></svg>
<div class="t" style="left:951px;top:234.05px;font-size:10.1px;letter-spacing:-0.052px;color:#111">100608 EgyevesekaSzoci...</div>
<div class="t" style="right:102.5px;top:234.05px;font-size:10.1px;letter-spacing:0.1px;color:#111;text-align:right">78456</div>
<div class="t" style="left:1143.2px;top:234.05px;font-size:10.1px;letter-spacing:0.1px;color:#111">2010-06-26 2</div>
<svg class="r" style="left:936px;top:249px" width="13" height="14" viewBox="0 0 13 14"><path d="M0.5 0.5H9.3L12.5 3.7V13.5H0.5Z" fill="#c4f0fa" stroke="#7a7a7a"/><path d="M9.3 0.5V3.7H12.5" fill="#fff" stroke="#8a8a8a" stroke-width="0.7"/><text x="0.1" y="13.4" font-family="Liberation Sans" font-weight="bold" font-size="8" fill="#000" transform="scale(1.1 0.85)" letter-spacing="-0.1" stroke="#000" stroke-width="0.35">SD</text></svg>
<div class="t" style="left:951px;top:251.05px;font-size:10.1px;letter-spacing:0.052px;color:#111">100616 NyarVeszelyeiTav...</div>
<div class="t" style="right:102.5px;top:251.05px;font-size:10.1px;letter-spacing:0.1px;color:#111;text-align:right">226912</div>
<div class="t" style="left:1143.2px;top:251.05px;font-size:10.1px;letter-spacing:0.1px;color:#111">2010-07-05 0</div>
<div class="r" style="left:948px;top:264px;width:255px;height:17px;background:#f0f0f0"></div>
<svg class="r" style="left:936px;top:266px" width="13" height="14" viewBox="0 0 13 14"><path d="M0.5 0.5H9.3L12.5 3.7V13.5H0.5Z" fill="#c4f0fa" stroke="#7a7a7a"/><path d="M9.3 0.5V3.7H12.5" fill="#fff" stroke="#8a8a8a" stroke-width="0.7"/><text x="0.1" y="13.4" font-family="Liberation Sans" font-weight="bold" font-size="8" fill="#000" transform="scale(1.1 0.85)" letter-spacing="-0.1" stroke="#000" stroke-width="0.35">SD</text></svg>
<div class="t" style="left:951px;top:268.05px;font-size:10.1px;letter-spacing:-0.010px;color:#111">100702Hp_Kesz_Birkozok...</div>
<div class="t" style="right:102.5px;top:268.05px;font-size:10.1px;letter-spacing:0.1px;color:#111;text-align:right">497018</div>
<div class="t" style="left:1143.2px;top:268.05px;font-size:10.1px;letter-spacing:0.1px;color:#111">2010-07-03 0</div>
<svg class="r" style="left:936px;top:283px" width="13" height="14" viewBox="0 0 13 14"><path d="M0.5 0.5H9.3L12.5 3.7V13.5H0.5Z" fill="#fff" stroke="#7a7a7a"/><text x="3.2" y="7" font-family="Liberation Sans" font-weight="bold" font-size="7.6" fill="#000" stroke="#000" stroke-width="0.4">F</text><text x="0.4" y="13.2" font-family="Liberation Sans" font-weight="bold" font-size="6.6" fill="#c80d0d" stroke="#c80d0d" stroke-width="0.45" letter-spacing="-0.2">HD</text></svg>
<div class="t" style="left:951px;top:285.05px;font-size:10.1px;letter-spacing:0.126px;color:#111">12_éven_aluliaknak_nem...</div>
<div class="t" style="right:102.5px;top:285.05px;font-size:10.1px;letter-spacing:0.1px;color:#111;text-align:right">6246</div>
<div class="t" style="left:1143.2px;top:285.05px;font-size:10.1px;letter-spacing:0.1px;color:#111">2017-07-12 0</div>
<svg class="r" style="left:936px;top:300px" width="13" height="14" viewBox="0 0 13 14"><path d="M0.5 0.5H9.3L12.5 3.7V13.5H0.5Z" fill="#fdfdfd" stroke="#6e6e6e"/><path d="M9.3 0.5V3.7H12.5" fill="#fff" stroke="#8a8a8a" stroke-width="0.7"/><rect x="2.1" y="4" width="8.5" height="8.8" fill="#3c4858"/><rect x="4.8" y="4.4" width="3.4" height="8" fill="#66a6da"/><rect x="4.8" y="7.2" width="3.4" height="1.6" fill="#3e5a8a"/><path d="M3.5 5v1M3.5 7v1M3.5 9v1M3.5 11v1M9.3 5v1M9.3 7v1M9.3 9v1M9.3 11v1" stroke="#f4f8ff" stroke-width="1.1"/></svg>
<div class="t" style="left:951px;top:302.05px;font-size:10.1px;letter-spacing:0.106px;color:#111">1percMOV.mov</div>
<div class="t" style="right:102.5px;top:302.05px;font-size:10.1px;letter-spacing:0.1px;color:#111;text-align:right">222194</div>
<div class="t" style="left:1143.2px;top:302.05px;font-size:10.1px;letter-spacing:0.1px;color:#111">2010-01-12 0</div>
<svg class="r" style="left:935px;top:317px" width="13" height="14" viewBox="0 0 13 14"><rect x="0" y="0.5" width="12.4" height="13.5" fill="#e6cf7a"/><rect x="0" y="0.5" width="3" height="13.5" fill="#f2e2a0"/><rect x="5" y="2" width="1.8" height="12" fill="#c9a94a"/><rect x="9" y="0.5" width="3.4" height="13.5" fill="#d8b957"/></svg>
<div class="t" style="left:951px;top:319.05px;font-size:10.1px;letter-spacing:0.100px;color:#111">2</div>
<svg class="r" style="left:936px;top:334px" width="13" height="14" viewBox="0 0 13 14"><path d="M0.5 0.5H9.3L12.5 3.7V13.5H0.5Z" fill="#fdfdfd" stroke="#6e6e6e"/><path d="M9.3 0.5V3.7H12.5" fill="#fff" stroke="#8a8a8a" stroke-width="0.7"/><rect x="2.1" y="4" width="8.5" height="8.8" fill="#3c4858"/><rect x="4.8" y="4.4" width="3.4" height="8" fill="#66a6da"/><rect x="4.8" y="7.2" width="3.4" height="1.6" fill="#3e5a8a"/><path d="M3.5 5v1M3.5 7v1M3.5 9v1M3.5 11v1M9.3 5v1M9.3 7v1M9.3 9v1M9.3 11v1" stroke="#f4f8ff" stroke-width="1.1"/></svg>
<div class="t" style="left:951px;top:336.05px;font-size:10.1px;letter-spacing:0.288px;color:#111">2008.avi</div>
<div class="t" style="right:102.5px;top:336.05px;font-size:10.1px;letter-spacing:0.1px;color:#111;text-align:right">271982</div>
<div class="t" style="left:1143.2px;top:336.05px;font-size:10.1px;letter-spacing:0.1px;color:#111">2008-01-10 1</div>
<svg class="r" style="left:936px;top:351px" width="13" height="14" viewBox="0 0 13 14"><path d="M0.5 0.5H9.3L12.5 3.7V13.5H0.5Z" fill="#fdfdfd" stroke="#6e6e6e"/><path d="M9.3 0.5V3.7H12.5" fill="#fff" stroke="#8a8a8a" stroke-width="0.7"/><rect x="2.1" y="4" width="8.5" height="8.8" fill="#3c4858"/><rect x="4.8" y="4.4" width="3.4" height="8" fill="#66a6da"/><rect x="4.8" y="7.2" width="3.4" height="1.6" fill="#3e5a8a"/><path d="M3.5 5v1M3.5 7v1M3.5 9v1M3.5 11v1M9.3 5v1M9.3 7v1M9.3 9v1M9.3 11v1" stroke="#f4f8ff" stroke-width="1.1"/></svg>
<div class="t" style="left:951px;top:353.05px;font-size:10.1px;letter-spacing:0.343px;color:#111">20130306_testuleti_prob...</div>
<div class="t" style="right:102.5px;top:353.05px;font-size:10.1px;letter-spacing:0.1px;color:#111;text-align:right">70406</div>
<div class="t" style="left:1143.2px;top:353.05px;font-size:10.1px;letter-spacing:0.1px;color:#111">2013-03-12 1</div>
<svg class="r" style="left:936px;top:368px" width="13" height="14" viewBox="0 0 13 14"><path d="M0.5 0.5H9.3L12.5 3.7V13.5H0.5Z" fill="#fdfdfd" stroke="#6e6e6e"/><path d="M9.3 0.5V3.7H12.5" fill="#fff" stroke="#8a8a8a" stroke-width="0.7"/><rect x="2.1" y="4" width="8.5" height="8.8" fill="#3c4858"/><rect x="4.8" y="4.4" width="3.4" height="8" fill="#66a6da"/><rect x="4.8" y="7.2" width="3.4" height="1.6" fill="#3e5a8a"/><path d="M3.5 5v1M3.5 7v1M3.5 9v1M3.5 11v1M9.3 5v1M9.3 7v1M9.3 9v1M9.3 11v1" stroke="#f4f8ff" stroke-width="1.1"/></svg>
<div class="t" style="left:951px;top:370.05px;font-size:10.1px;letter-spacing:0.430px;color:#111">20131005085945.m2t</div>
<div class="t" style="right:102.5px;top:370.05px;font-size:10.1px;letter-spacing:0.1px;color:#111;text-align:right">139447</div>
<div class="t" style="left:1143.2px;top:370.05px;font-size:10.1px;letter-spacing:0.1px;color:#111">2013-10-09 1</div>
<svg class="r" style="left:936px;top:385px" width="13" height="14" viewBox="0 0 13 14"><path d="M0.5 0.5H9.3L12.5 3.7V13.5H0.5Z" fill="#fdfdfd" stroke="#6e6e6e"/><path d="M9.3 0.5V3.7H12.5" fill="#fff" stroke="#8a8a8a" stroke-width="0.7"/><rect x="2.1" y="4" width="8.5" height="8.8" fill="#3c4858"/><rect x="4.8" y="4.4" width="3.4" height="8" fill="#66a6da"/><rect x="4.8" y="7.2" width="3.4" height="1.6" fill="#3e5a8a"/><path d="M3.5 5v1M3.5 7v1M3.5 9v1M3.5 11v1M9.3 5v1M9.3 7v1M9.3 9v1M9.3 11v1" stroke="#f4f8ff" stroke-width="1.1"/></svg>
<div class="t" style="left:951px;top:387.05px;font-size:10.1px;letter-spacing:-0.305px;color:#111">2VTS_01_4 - Copy.mpg</div>
<div class="t" style="right:102.5px;top:387.05px;font-size:10.1px;letter-spacing:0.1px;color:#111;text-align:right">998826</div>
<div class="t" style="left:1143.2px;top:387.05px;font-size:10.1px;letter-spacing:0.1px;color:#111">2008-07-15 1</div>
<svg class="r" style="left:936px;top:402px" width="13" height="14" viewBox="0 0 13 14"><path d="M0.5 0.5H9.3L12.5 3.7V13.5H0.5Z" fill="#fdfdfd" stroke="#6e6e6e"/><path d="M9.3 0.5V3.7H12.5" fill="#fff" stroke="#8a8a8a" stroke-width="0.7"/><rect x="2.1" y="4" width="8.5" height="8.8" fill="#3c4858"/><rect x="4.8" y="4.4" width="3.4" height="8" fill="#66a6da"/><rect x="4.8" y="7.2" width="3.4" height="1.6" fill="#3e5a8a"/><path d="M3.5 5v1M3.5 7v1M3.5 9v1M3.5 11v1M9.3 5v1M9.3 7v1M9.3 9v1M9.3 11v1" stroke="#f4f8ff" stroke-width="1.1"/></svg>
<div class="t" style="left:951px;top:404.05px;font-size:10.1px;letter-spacing:-0.540px;color:#111">2VTS_01_4.VOB</div>
<div class="t" style="right:102.5px;top:404.05px;font-size:10.1px;letter-spacing:0.1px;color:#111;text-align:right">998826</div>
<div class="t" style="left:1143.2px;top:404.05px;font-size:10.1px;letter-spacing:0.1px;color:#111">2008-07-15 1</div>
<svg class="r" style="left:936px;top:419px" width="13" height="14" viewBox="0 0 13 14"><path d="M0.5 0.5H9.3L12.5 3.7V13.5H0.5Z" fill="#fdfdfd" stroke="#6e6e6e"/><path d="M9.3 0.5V3.7H12.5" fill="#fff" stroke="#8a8a8a" stroke-width="0.7"/><rect x="2.1" y="4" width="8.5" height="8.8" fill="#3c4858"/><rect x="4.8" y="4.4" width="3.4" height="8" fill="#66a6da"/><rect x="4.8" y="7.2" width="3.4" height="1.6" fill="#3e5a8a"/><path d="M3.5 5v1M3.5 7v1M3.5 9v1M3.5 11v1M9.3 5v1M9.3 7v1M9.3 9v1M9.3 11v1" stroke="#f4f8ff" stroke-width="1.1"/></svg>
<div class="t" style="left:951px;top:421.05px;font-size:10.1px;letter-spacing:0.180px;color:#111">43_Tihanyi_Tetoteri_Este...</div>
<div class="t" style="right:102.5px;top:421.05px;font-size:10.1px;letter-spacing:0.1px;color:#111;text-align:right">3930644</div>
<div class="t" style="left:1143.2px;top:421.05px;font-size:10.1px;letter-spacing:0.1px;color:#111">2012-12-13 0</div>
<svg class="r" style="left:936px;top:436px" width="13" height="14" viewBox="0 0 13 14"><path d="M0.5 0.5H9.3L12.5 3.7V13.5H0.5Z" fill="#fdfdfd" stroke="#6e6e6e"/><path d="M9.3 0.5V3.7H12.5" fill="#fff" stroke="#8a8a8a" stroke-width="0.7"/><rect x="2.1" y="4" width="8.5" height="8.8" fill="#3c4858"/><rect x="4.8" y="4.4" width="3.4" height="8" fill="#66a6da"/><rect x="4.8" y="7.2" width="3.4" height="1.6" fill="#3e5a8a"/><path d="M3.5 5v1M3.5 7v1M3.5 9v1M3.5 11v1M9.3 5v1M9.3 7v1M9.3 9v1M9.3 11v1" stroke="#f4f8ff" stroke-width="1.1"/></svg>
<div class="t" style="left:951px;top:438.05px;font-size:10.1px;letter-spacing:0.180px;color:#111">49_Tihanyi_Tetoteri_Este...</div>
<div class="t" style="right:102.5px;top:438.05px;font-size:10.1px;letter-spacing:0.1px;color:#111;text-align:right">4384992</div>
<div class="t" style="left:1143.2px;top:438.05px;font-size:10.1px;letter-spacing:0.1px;color:#111">2013-01-15 1</div>
<svg class="r" style="left:936px;top:453px" width="13" height="14" viewBox="0 0 13 14"><path d="M0.5 0.5H9.3L12.5 3.7V13.5H0.5Z" fill="#c4f0fa" stroke="#7a7a7a"/><path d="M9.3 0.5V3.7H12.5" fill="#fff" stroke="#8a8a8a" stroke-width="0.7"/><text x="0.1" y="13.4" font-family="Liberation Sans" font-weight="bold" font-size="8" fill="#000" transform="scale(1.1 0.85)" letter-spacing="-0.1" stroke="#000" stroke-width="0.35">SD</text></svg>
<div class="t" style="left:951px;top:455.05px;font-size:10.1px;letter-spacing:0.316px;color:#111">a.avi</div>
<div class="t" style="right:102.5px;top:455.05px;font-size:10.1px;letter-spacing:0.1px;color:#111;text-align:right">166348</div>
<div class="t" style="left:1143.2px;top:455.05px;font-size:10.1px;letter-spacing:0.1px;color:#111">2010-06-12 1</div>
<svg class="r" style="left:936px;top:470px" width="13" height="14" viewBox="0 0 13 14"><path d="M0.5 0.5H9.3L12.5 3.7V13.5H0.5Z" fill="#fdfdfd" stroke="#6e6e6e"/><path d="M9.3 0.5V3.7H12.5" fill="#fff" stroke="#8a8a8a" stroke-width="0.7"/><rect x="2.1" y="4" width="8.5" height="8.8" fill="#3c4858"/><rect x="4.8" y="4.4" width="3.4" height="8" fill="#66a6da"/><rect x="4.8" y="7.2" width="3.4" height="1.6" fill="#3e5a8a"/><path d="M3.5 5v1M3.5 7v1M3.5 9v1M3.5 11v1M9.3 5v1M9.3 7v1M9.3 9v1M9.3 11v1" stroke="#f4f8ff" stroke-width="1.1"/></svg>
<div class="t" style="left:951px;top:472.05px;font-size:10.1px;letter-spacing:0.100px;color:#111">adasreszlet_microsoftdv...</div>
<div class="t" style="right:102.5px;top:472.05px;font-size:10.1px;letter-spacing:0.1px;color:#111;text-align:right">602009</div>
<div class="t" style="left:1143.2px;top:472.05px;font-size:10.1px;letter-spacing:0.1px;color:#111">2010-04-23 1</div></div></div>
<div class="t" style="top:507.44px;font-size:10.7px;color:#f4f4f4;font-weight:bold;letter-spacing:0.349px;left:962.30px;width:400px;text-align:center;">NÉV</div>
<div class="t" style="top:526.59px;font-size:11px;color:#b4b4b4;font-weight:bold;letter-spacing:0.190px;left:910.90px;">File neve</div>
<div class="t" style="top:526.59px;font-size:11px;color:#8c8c8c;font-weight:bold;left:1129.80px;">\BROADCASTdata2</div>
<div class="t" style="top:545.19px;font-size:11px;color:#b4b4b4;font-weight:bold;letter-spacing:0.044px;left:910.90px;">Állanadó lista szerkesztése</div>
<div class="r" style="left:1127px;top:545px;width:18px;height:13px;background:transparent;border:1px solid #b6b6b6;box-sizing:border-box;"></div>
<div class="r" style="left:938px;top:585px;width:147px;height:26px;background:#3c3c3c;"></div>
<div class="r" style="left:942px;top:590px;width:22px;height:16px;background:#f0f0f0;border:1px solid #9a9a9a;box-sizing:border-box;"></div>
<svg class="r " style="left:942px;top:590px" width="22" height="16" viewBox="0 0 22 16"><path d="M8.5 8L12.5 4.5V11.5Z" fill="#000"/></svg>
<div class="r" style="left:1058px;top:590px;width:22px;height:16px;background:#f0f0f0;border:1px solid #9a9a9a;box-sizing:border-box;"></div>
<svg class="r " style="left:1058px;top:590px" width="22" height="16" viewBox="0 0 22 16"><path d="M13.5 8L9.5 4.5V11.5Z" fill="#000"/></svg>
<div class="t" style="top:593.43px;font-size:10px;color:#ffffff;font-weight:bold;letter-spacing:-0.028px;left:811.00px;width:400px;text-align:center;">2018. január</div>
<div class="t" style="top:615.03px;font-size:10px;color:#6e6e6e;left:748.50px;width:400px;text-align:center;">H</div>
<div class="t" style="top:615.03px;font-size:10px;color:#6e6e6e;left:769.40px;width:400px;text-align:center;">K</div>
<div class="t" style="top:615.03px;font-size:10px;color:#6e6e6e;left:790.30px;width:400px;text-align:center;">Sze</div>
<div class="t" style="top:615.03px;font-size:10px;color:#6e6e6e;left:811.20px;width:400px;text-align:center;">Cs</div>
<div class="t" style="top:615.03px;font-size:10px;color:#6e6e6e;left:832.10px;width:400px;text-align:center;">P</div>
<div class="t" style="top:615.03px;font-size:10px;color:#6e6e6e;left:853.00px;width:400px;text-align:center;">Szo</div>
<div class="t" style="top:615.03px;font-size:10px;color:#6e6e6e;left:874.00px;width:400px;text-align:center;">V</div>
<div class="r" style="left:942px;top:627px;width:140px;height:1px;background:#d8d8d8;"></div>
<div class="r" style="left:1064px;top:658px;width:21px;height:15px;background:#3b3b3b;"></div>
<div class="t" style="top:630.83px;font-size:10px;color:#8a8a8a;right:278.30px;text-align:right;">25</div>
<div class="t" style="top:630.83px;font-size:10px;color:#8a8a8a;right:257.45px;text-align:right;">26</div>
<div class="t" style="top:630.83px;font-size:10px;color:#8a8a8a;right:236.60px;text-align:right;">27</div>
<div class="t" style="top:630.83px;font-size:10px;color:#8a8a8a;right:215.75px;text-align:right;">28</div>
<div class="t" style="top:630.83px;font-size:10px;color:#8a8a8a;right:194.90px;text-align:right;">29</div>
<div class="t" style="top:630.83px;font-size:10px;color:#8a8a8a;right:174.05px;text-align:right;">30</div>
<div class="t" style="top:630.83px;font-size:10px;color:#8a8a8a;right:153.20px;text-align:right;">31</div>
<div class="t" style="top:645.73px;font-size:10px;color:#ffffff;right:278.30px;text-align:right;-webkit-text-stroke:0.3px #ffffff;">1</div>
<div class="t" style="top:645.73px;font-size:10px;color:#ffffff;right:257.45px;text-align:right;-webkit-text-stroke:0.3px #ffffff;">2</div>
<div class="t" style="top:645.73px;font-size:10px;color:#ffffff;right:236.60px;text-align:right;-webkit-text-stroke:0.3px #ffffff;">3</div>
<div class="t" style="top:645.73px;font-size:10px;color:#ffffff;right:215.75px;text-align:right;-webkit-text-stroke:0.3px #ffffff;">4</div>
<div class="t" style="top:645.73px;font-size:10px;color:#ffffff;right:194.90px;text-align:right;-webkit-text-stroke:0.3px #ffffff;">5</div>
<div class="t" style="top:645.73px;font-size:10px;color:#ffffff;right:174.05px;text-align:right;-webkit-text-stroke:0.3px #ffffff;">6</div>
<div class="t" style="top:645.73px;font-size:10px;color:#ffffff;right:153.20px;text-align:right;-webkit-text-stroke:0.3px #ffffff;">7</div>
<div class="t" style="top:660.63px;font-size:10px;color:#ffffff;right:278.30px;text-align:right;-webkit-text-stroke:0.3px #ffffff;">8</div>
<div class="t" style="top:660.63px;font-size:10px;color:#ffffff;right:257.45px;text-align:right;-webkit-text-stroke:0.3px #ffffff;">9</div>
<div class="t" style="top:660.63px;font-size:10px;color:#ffffff;right:236.60px;text-align:right;-webkit-text-stroke:0.3px #ffffff;">10</div>
<div class="t" style="top:660.63px;font-size:10px;color:#ffffff;right:215.75px;text-align:right;-webkit-text-stroke:0.3px #ffffff;">11</div>
<div class="t" style="top:660.63px;font-size:10px;color:#ffffff;right:194.90px;text-align:right;-webkit-text-stroke:0.3px #ffffff;">12</div>
<div class="t" style="top:660.63px;font-size:10px;color:#ffffff;right:174.05px;text-align:right;-webkit-text-stroke:0.3px #ffffff;">13</div>
<div class="t" style="top:660.63px;font-size:10px;color:#ffffff;right:153.20px;text-align:right;-webkit-text-stroke:0.3px #ffffff;">14</div>
<div class="t" style="top:675.53px;font-size:10px;color:#ffffff;right:278.30px;text-align:right;-webkit-text-stroke:0.3px #ffffff;">15</div>
<div class="t" style="top:675.53px;font-size:10px;color:#ffffff;right:257.45px;text-align:right;-webkit-text-stroke:0.3px #ffffff;">16</div>
<div class="t" style="top:675.53px;font-size:10px;color:#ffffff;right:236.60px;text-align:right;-webkit-text-stroke:0.3px #ffffff;">17</div>
<div class="t" style="top:675.53px;font-size:10px;color:#ffffff;right:215.75px;text-align:right;-webkit-text-stroke:0.3px #ffffff;">18</div>
<div class="t" style="top:675.53px;font-size:10px;color:#ffffff;right:194.90px;text-align:right;-webkit-text-stroke:0.3px #ffffff;">19</div>
<div class="t" style="top:675.53px;font-size:10px;color:#ffffff;right:174.05px;text-align:right;-webkit-text-stroke:0.3px #ffffff;">20</div>
<div class="t" style="top:675.53px;font-size:10px;color:#ffffff;right:153.20px;text-align:right;-webkit-text-stroke:0.3px #ffffff;">21</div>
<div class="t" style="top:690.43px;font-size:10px;color:#ffffff;right:278.30px;text-align:right;-webkit-text-stroke:0.3px #ffffff;">22</div>
<div class="t" style="top:690.43px;font-size:10px;color:#ffffff;right:257.45px;text-align:right;-webkit-text-stroke:0.3px #ffffff;">23</div>
<div class="t" style="top:690.43px;font-size:10px;color:#ffffff;right:236.60px;text-align:right;-webkit-text-stroke:0.3px #ffffff;">24</div>
<div class="t" style="top:690.43px;font-size:10px;color:#ffffff;right:215.75px;text-align:right;-webkit-text-stroke:0.3px #ffffff;">25</div>
<div class="t" style="top:690.43px;font-size:10px;color:#ffffff;right:194.90px;text-align:right;-webkit-text-stroke:0.3px #ffffff;">26</div>
<div class="t" style="top:690.43px;font-size:10px;color:#ffffff;right:174.05px;text-align:right;-webkit-text-stroke:0.3px #ffffff;">27</div>
<div class="t" style="top:690.43px;font-size:10px;color:#ffffff;right:153.20px;text-align:right;-webkit-text-stroke:0.3px #ffffff;">28</div>
<div class="t" style="top:705.33px;font-size:10px;color:#ffffff;right:278.30px;text-align:right;-webkit-text-stroke:0.3px #ffffff;">29</div>
<div class="t" style="top:705.33px;font-size:10px;color:#ffffff;right:257.45px;text-align:right;-webkit-text-stroke:0.3px #ffffff;">30</div>
<div class="t" style="top:705.33px;font-size:10px;color:#ffffff;right:236.60px;text-align:right;-webkit-text-stroke:0.3px #ffffff;">31</div>
<div class="t" style="top:705.33px;font-size:10px;color:#707070;right:215.75px;text-align:right;">1</div>
<div class="t" style="top:705.33px;font-size:10px;color:#707070;right:194.90px;text-align:right;">2</div>
<div class="t" style="top:705.33px;font-size:10px;color:#707070;right:174.05px;text-align:right;">3</div>
<div class="t" style="top:705.33px;font-size:10px;color:#707070;right:153.20px;text-align:right;">4</div>
<div class="r" style="left:1146px;top:672px;width:71px;height:22px;background:linear-gradient(#3590e6,#1f78d2);border-radius:11px;box-shadow:0 0 0 1px #2b4f78;"></div>
<div class="t" style="top:676.48px;font-size:11.6px;color:#ffffff;letter-spacing:0.392px;left:982.00px;width:400px;text-align:center;">Alkalmaz</div>
<div class="r" style="left:1146px;top:704px;width:71px;height:22px;background:linear-gradient(#46a21c,#358c10);border-radius:11px;box-shadow:0 0 0 1px #2f5a1e;"></div>
<div class="t" style="top:708.78px;font-size:11.6px;color:#f4ffd8;left:981.80px;width:400px;text-align:center;">Ok</div>
<!--PLACEHOLDER-->
</body></html>
